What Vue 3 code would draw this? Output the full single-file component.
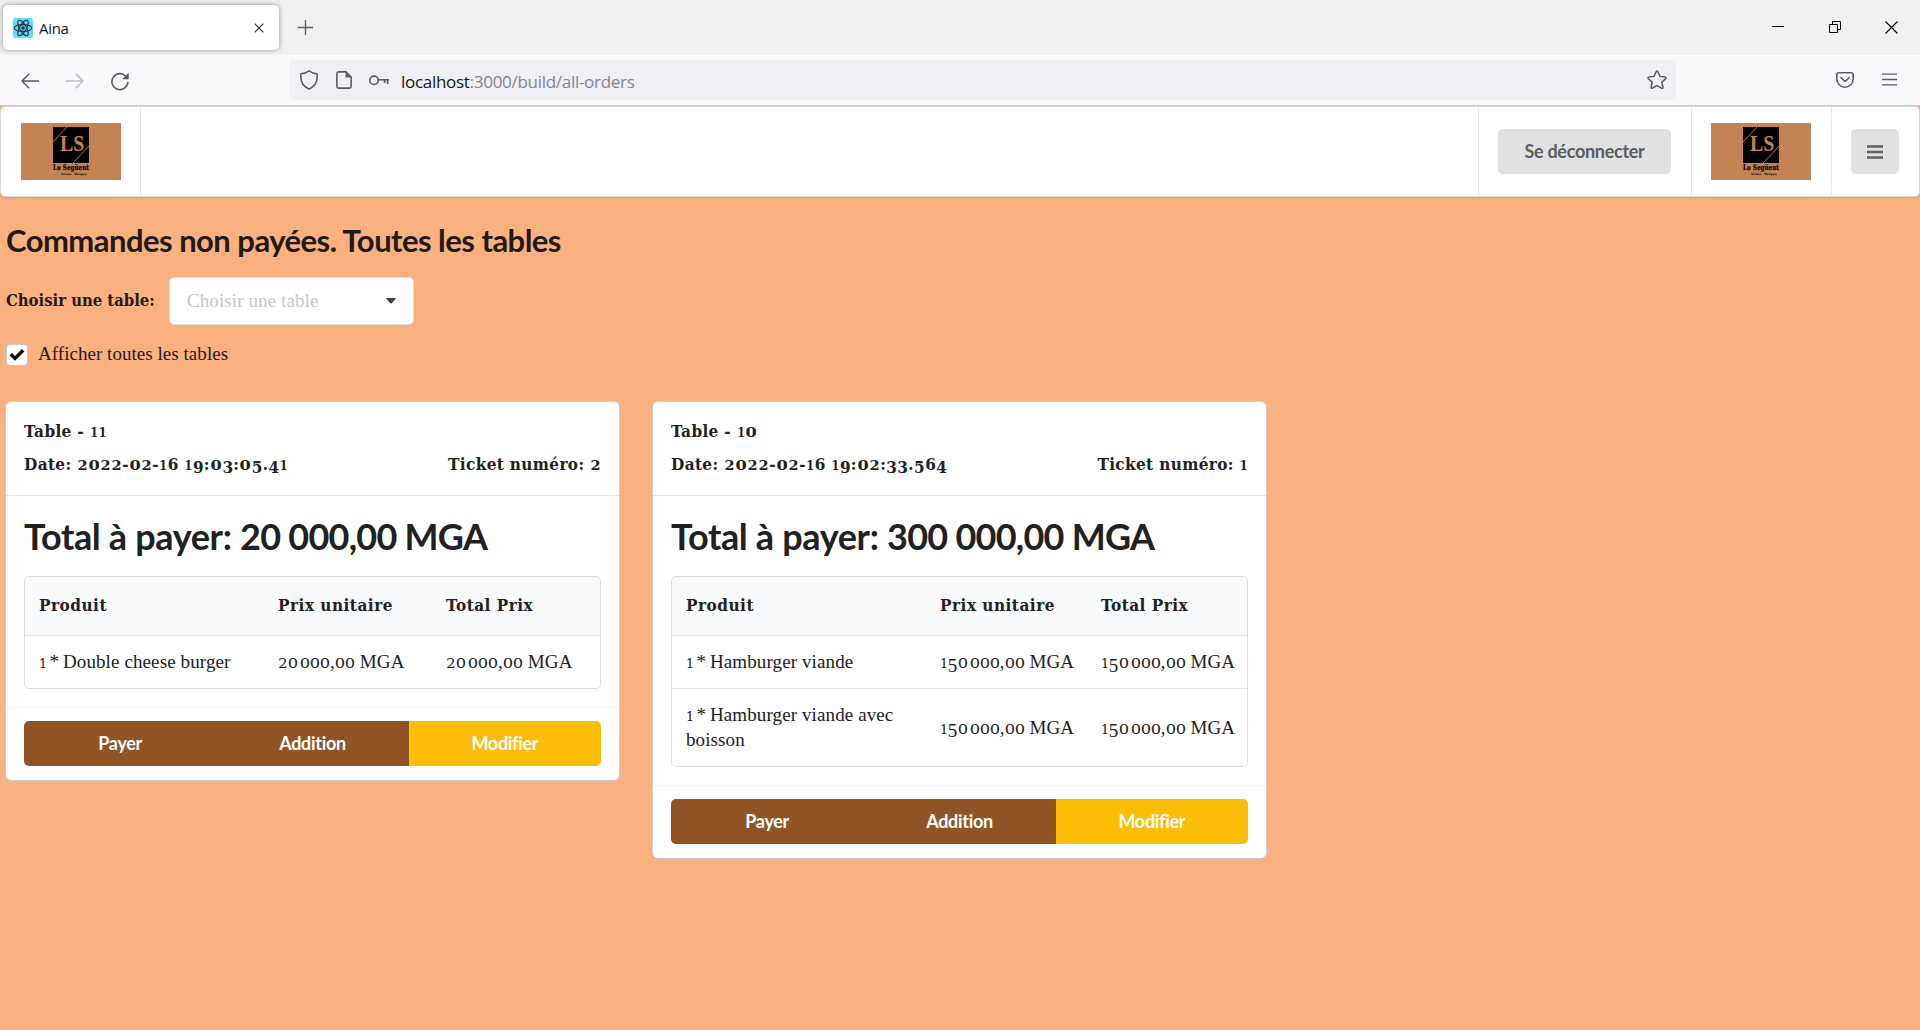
<script setup>
import { h } from 'vue'

// Text set with old-style figures: 0-2 sit at x-height, 3-5, 7 and 9 descend.
const glyph = (c) => {
  if (/\d/.test(c)) return h('span', { class: ['fig', `fig-${c}`] }, c)
  if (c === '\u202f') return h('span', { class: 'thin' }, c)
  if (c === '*') return h('span', { class: 'times' }, c)
  return c
}
const Figures = (props) => h('span', { class: 'figures' }, [...props.text].map(glyph))
Figures.props = ['text']

const LogoMark = () =>
  h('svg', { class: 'logo', viewBox: '0 0 100 57', width: 100, height: 57 }, [
    h('rect', { width: 100, height: 57, fill: '#c58252' }),
    h('rect', { x: 32, y: 4, width: 36, height: 36, fill: '#000' }),
    h('path', { d: 'M32 19 46 4M52 40 68 23', stroke: '#c58252', 'stroke-width': 0.9 }),
    h('text', { x: 51.2, y: 28.3, class: 'logo-initials', textLength: 24.5, lengthAdjust: 'spacingAndGlyphs' }, 'LS'),
    h('text', { x: 50, y: 47, class: 'logo-name', textLength: 36, lengthAdjust: 'spacingAndGlyphs' }, 'Lo Següent'),
    h('text', { x: 53, y: 51.6, class: 'logo-tag', textLength: 26, lengthAdjust: 'spacingAndGlyphs' }, 'Artisan   Malagasy')
  ])

const orders = [
  {
    table: 'Table - 11',
    date: 'Date: 2022-02-16 19:03:05.41',
    ticket: 'Ticket numéro: 2',
    amount: '20 000,00 MGA',
    layout: 'narrow',
    lines: [{ name: '1 * Double cheese burger', unit: '20\u202f000,00 MGA', sum: '20\u202f000,00 MGA' }]
  },
  {
    table: 'Table - 10',
    date: 'Date: 2022-02-16 19:02:33.564',
    ticket: 'Ticket numéro: 1',
    amount: '300 000,00 MGA',
    layout: 'wide',
    lines: [
      { name: '1 * Hamburger viande', unit: '150\u202f000,00 MGA', sum: '150\u202f000,00 MGA' },
      { name: '1 * Hamburger viande avec boisson', unit: '150\u202f000,00 MGA', sum: '150\u202f000,00 MGA' }
    ]
  }
]
</script>

<template>
  <div class="window">
    <div class="tabbar">
      <div class="tab">
        <svg class="favicon" width="20" height="20" viewBox="0 0 20 20">
          <rect width="20" height="20" rx="2.5" fill="#61dafb" />
          <g fill="none" stroke="#20303c" stroke-width="1.1">
            <ellipse cx="10" cy="10" rx="8.7" ry="3.4" />
            <ellipse cx="10" cy="10" rx="8.7" ry="3.4" transform="rotate(60 10 10)" />
            <ellipse cx="10" cy="10" rx="8.7" ry="3.4" transform="rotate(120 10 10)" />
          </g>
          <circle cx="10" cy="10" r="1.8" fill="#20303c" />
        </svg>
        <span class="tab-title">Aina</span>
        <svg class="tab-close" width="10" height="10" viewBox="0 0 10 10"><path d="M.7.7 9.3 9.3M9.3.7.7 9.3" stroke="#333" stroke-width="1.2" /></svg>
      </div>
      <svg class="new-tab" width="15" height="15" viewBox="0 0 15 15"><path d="M7.5 0v15M0 7.5h15" stroke="#5b5b66" stroke-width="1.3" /></svg>
      <div class="controls">
        <svg width="12" height="13" viewBox="0 0 12 13"><path d="M0 5.5h12" stroke="#000" /></svg>
        <svg width="12" height="13" viewBox="0 0 12 13" fill="none" stroke="#000"><path d="M.5 3.5h8v8h-8zM3.5 3.5v-3h8v8h-3" /></svg>
        <svg width="13" height="13" viewBox="0 0 13 13"><path d="M.5.5l12 12M12.5.5l-12 12" stroke="#000" stroke-width="1.1" /></svg>
      </div>
    </div>

    <div class="toolbar">
      <div class="nav-icons">
        <svg width="18" height="16" viewBox="0 0 18 16" fill="none" stroke="#5b5b66" stroke-width="1.5"><path d="M18 8H1.2M8.2.8 1 8l7.2 7.2" /></svg>
        <svg width="18" height="16" viewBox="0 0 18 16" fill="none" stroke="#bcbcc2" stroke-width="1.5"><path d="M0 8h16.8M9.8.8 17 8l-7.2 7.2" /></svg>
        <svg width="18" height="19" viewBox="0 0 18 19"><path d="M14.800 4.200A8 8 0 1 0 16.900 10" fill="none" stroke="#5b5b66" stroke-width="1.6" /><path d="M17.700.8v6.500h-6.600z" fill="#5b5b66" /></svg>
      </div>
      <div class="urlbar">
        <svg class="shield" width="18" height="20" viewBox="0 0 18 20"><path d="M9 .9c2.400 1.700 5 2.700 8.100 2.900v3.900c0 5-3 8.900-8.100 11.400C3.900 16.600.9 12.700.9 7.700V3.800C4 3.600 6.600 2.600 9 .9z" fill="none" stroke="#5b5b66" stroke-width="1.6" stroke-linejoin="round" /></svg>
        <svg class="page-icon" width="16" height="18" viewBox="0 0 16 18"><path d="M10 .9H2.800Q.9.900.9 2.800v12.400q0 1.900 1.900 1.900h10.400q1.900 0 1.900-1.900V6z" fill="none" stroke="#5b5b66" stroke-width="1.6" /><path d="M9.500.500v6h6z" fill="#5b5b66" /></svg>
        <svg class="key" width="20" height="11" viewBox="0 0 20 11" fill="none" stroke="#5b5b66" stroke-width="1.6"><circle cx="5" cy="5.300" r="4.200" /><path d="M9.200 4.800H20M18.600 4.800v4.200M15.600 4.800v3.200" /></svg>
        <span class="url"><b>localhost</b>:3000/build/all-orders</span>
        <svg class="star" width="20" height="20" viewBox="0 0 20 20"><path d="M9.200 1.700q.8-1.300 1.600 0l2.200 4.700 5.200.7q1.500.4.500 1.500l-3.800 3.500 1 5.200q0 1.500-1.300.9L10 15.700l-4.600 2.500q-1.300.6-1.300-.9l1-5.200L1.300 8.600q-1-1.100.5-1.500L7 6.400z" fill="none" stroke="#5b5b66" stroke-width="1.500" /></svg>
      </div>
      <svg class="pocket" width="18" height="16" viewBox="0 0 18 16" fill="none" stroke="#5b5b66" stroke-width="1.600"><path d="M2.800.8h12.400q2 0 2 2V7a8.200 8.200 0 0 1-16.400 0V2.800q0-2 2-2z" /><path d="M4.800 5.500 9 9.500l4.200-4" stroke-linecap="round" /></svg>
      <svg class="burger" width="15" height="13" viewBox="0 0 15 13"><path d="M0 1.200h15M0 6.500h15M0 11.800h15" stroke="#5b5b66" stroke-width="1.300" /></svg>
    </div>

    <nav class="menu">
      <div class="item"><LogoMark /></div>
      <div class="item right"><button class="grey logout">Se déconnecter</button></div>
      <div class="item brand"><LogoMark /></div>
      <div class="item last">
        <button class="grey icon"><svg width="16" height="14" viewBox="0 0 16 14"><path d="M0 1.500h16M0 7h16M0 12.500h16" stroke="#606162" stroke-width="2.600" /></svg></button>
      </div>
    </nav>

    <main>
      <h2>Commandes non payées. Toutes les tables</h2>
      <div class="field">
        <label>Choisir une table:</label>
        <div class="dropdown">
          <span>Choisir une table</span>
          <svg width="10" height="6" viewBox="0 0 10 6"><path d="M.8 0h8.400q1 .2.300 1L5.700 5.200q-.7.600-1.400 0L.5 1Q-.2.200.8 0z" fill="#404040" /></svg>
        </div>
      </div>
      <div class="check">
        <span class="box"><svg width="16" height="13" viewBox="0 0 16 13"><path d="M1.800 6.300 6 10.400 14.200 2.300" fill="none" stroke="#111" stroke-width="3.500" /></svg></span>
        <span>Afficher toutes les tables</span>
      </div>

      <div class="cards">
        <article v-for="o in orders" :key="o.table" :class="['card', o.layout]">
          <header>
            <div><Figures :text="o.table" /></div>
            <div class="meta"><Figures :text="o.date" /><Figures :text="o.ticket" /></div>
          </header>
          <section>
            <h1>Total à payer: <span class="amount">{{ o.amount }}</span></h1>
            <div class="table">
              <div class="row head"><span>Produit</span><span>Prix unitaire</span><span>Total Prix</span></div>
              <div v-for="l in o.lines" :key="l.name" class="row">
                <span><Figures :text="l.name" /></span>
                <span class="price"><Figures :text="l.unit" /></span>
                <span class="price"><Figures :text="l.sum" /></span>
              </div>
            </div>
          </section>
          <footer>
            <div class="buttons"><button>Payer</button><button>Addition</button><button class="yellow">Modifier</button></div>
          </footer>
        </article>
      </div>
    </main>
  </div>
</template>

<style>
body { margin: 0; background: #fbb080; }
.logo { display: block; }
.logo-initials { font: 700 24px "Liberation Serif", serif; fill: #c58252; text-anchor: middle; }
.logo-name { font: 700 7.5px "DejaVu Serif", serif; fill: #000; stroke: #000; stroke-width: .2px; text-anchor: middle; }
.logo-tag { font: 700 3px "DejaVu Serif", serif; fill: #000; text-anchor: middle; white-space: pre; }
.fig { display: inline-block; width: .52em; text-align: center; letter-spacing: 0; line-height: 0; }
.fig-0, .fig-1, .fig-2 { font-family: "DejaVu Serif", serif; font-size: .67em; }
.fig-0 { width: .79em; transform: scaleX(1.28); }
.fig-1 { width: .6em; }
.fig-2 { width: .77em; transform: scaleX(1.15); }
.fig-3, .fig-4, .fig-5, .fig-7, .fig-9 { vertical-align: -.2em; }
.thin { font-size: .5em; line-height: 0; }
.times { margin: 0 -2px 0 -1px; position: relative; left: -1px; }
header .fig { width: .65em; }
header .fig-0, header .fig-1, header .fig-2 { font-size: .73em; font-family: "DejaVu Serif Condensed", "DejaVu Serif", serif; font-stretch: condensed; }
header .fig-0 { width: 1em; transform: scaleX(1.45); }
header .fig-1 { width: .69em; }
header .fig-2 { width: .88em; transform: scaleX(1.3); }
</style>

<style scoped>
* { box-sizing: border-box; }
.window { width: 1920px; height: 1030px; overflow: hidden; background: #fbb080; color: #212121; font: 19px/25px "Liberation Serif", Georgia, serif; letter-spacing: .1px; }
svg { display: block; flex: none; }
button { border: 0; margin: 0; padding: 0; font: 700 18px/18px Lato, sans-serif; }

.tabbar { height: 55px; background: #f0f0f0; display: flex; padding: 5px 22px 5px 3px; }
.tab { width: 276px; height: 45px; background: #fff; border-radius: 5px; box-shadow: 0 0 5px rgba(0, 0, 0, .4); display: flex; align-items: center; padding: 0 15px 0 10px; }
.tab-title { font: 15px/20px "Open Sans", sans-serif; color: #15141a; margin-left: 6px; letter-spacing: -.3px; }
.tab-close { margin-left: auto; }
.new-tab { margin: 15px 0 0 19px; }
.controls { margin: 16px 0 0 auto; display: flex; gap: 44px; }
.controls svg:first-child { margin-right: 1px; }

.toolbar { height: 51px; background: #f9f9fb; border-bottom: 1px solid #cccccf; display: flex; padding: 5px 22px 0 21px; }
.nav-icons { display: flex; align-items: center; gap: 27px; width: 268px; height: 42px; }
.urlbar { width: 1387px; height: 40px; border-radius: 5px; background: #f0eff4; display: flex; align-items: center; padding: 0 9px 0 11px; }
.page-icon { margin-left: 18px; }
.key { margin-left: 17px; }
.url { margin-left: 12px; font: 17px/24px "Open Sans", sans-serif; color: #85848c; padding-top: 3px; letter-spacing: -.29px; }
.url b { font-weight: 400; color: #15141a; }
.star { margin-left: auto; }
.pocket { margin: 12px 0 0 160px; }
.burger { margin: 13px 0 0 28px; }

.menu { height: 91px; background: #fff; border: 1px solid #d9d9da; border-radius: 5px; box-shadow: 0 1px 2px rgba(34, 36, 38, .15); display: flex; }
.item { display: flex; align-items: center; padding: 0 19px 0 20px; border-right: 1px solid #e8e8e9; }
.right { margin-left: auto; border-left: 1px solid #e8e8e9; padding: 0 20px 0 19px; }
.item.brand { padding: 0 20px 0 19px; }
.item.last { border-right: 0; padding: 0 20px 0 19px; }
.grey { background: #e0e1e2; color: #5c5d5e; border-radius: 5px; height: 45px; }
.logout { width: 173px; letter-spacing: -.28px; padding-bottom: 1px; }
.icon { width: 48px; display: flex; align-items: center; justify-content: center; }

main { padding: 0 6px; }
h2 { margin: 25px 0 0; font: 700 31px/36px Lato, sans-serif; color: #211a15; letter-spacing: -.53px; white-space: nowrap; }
.field { display: flex; align-items: center; height: 48px; margin-top: 19px; color: #211a15; }
label { width: 163px; font: 700 16.500px/24px "DejaVu Serif Condensed", "DejaVu Serif", serif; font-stretch: condensed; letter-spacing: 0; white-space: nowrap; }
.dropdown { width: 245px; height: 48px; background: #fff; border: 1px solid #dededf; border-radius: 5px; display: flex; align-items: center; justify-content: space-between; padding: 0 17px; color: #c7c7c7; }
.dropdown span { padding-bottom: 2px; }
.check { display: flex; align-items: center; height: 23px; margin-top: 18px; color: #211a15; letter-spacing: .04px; }
.check > span:last-child { padding-bottom: 3px; }
.box { width: 22px; height: 22px; background: #fff; border: 1px solid #c9c9ca; border-radius: 4px; display: flex; align-items: center; justify-content: center; margin-right: 10px; }

.cards { display: flex; align-items: flex-start; gap: 34px; margin-top: 36px; }
.card { width: 613px; background: #fff; border-radius: 5px; box-shadow: 0 1px 3px #c8c0bb, 0 0 0 1px #d4d4d5; }
header { height: 94px; padding: 17px 18px 0; border-bottom: 1px solid #e7e7e8; font: 700 17px/25px "DejaVu Serif Condensed", "DejaVu Serif", serif; font-stretch: condensed; letter-spacing: .35px; white-space: nowrap; }
header > div { height: 25px; }
header .meta { display: flex; justify-content: space-between; margin-top: 8px; }
section { padding: 0 18px 18px; }
h1 { margin: 0; padding-top: 17px; height: 80px; font: 700 36px/46px Lato, sans-serif; letter-spacing: -.35px; white-space: nowrap; }
.amount { letter-spacing: -.75px; }
.table { border: 1px solid #dededf; border-radius: 5px; }
.row { display: grid; grid-template-columns: 239px 168px 1fr; align-items: center; padding: 13px 0 14px; border-top: 1px solid #e7e7e8; }
.row > span { padding: 0 14px; }
.wide .row { grid-template-columns: 254px 161px 1fr; }
.wide .row > span { padding-right: 0; }
.wide .row > span:first-child { padding-right: 14px; }
.row.head { height: 58px; background: #f9fafb; border-top: 0; border-radius: 5px 5px 0 0; font: 700 17px/25px "DejaVu Serif Condensed", "DejaVu Serif", serif; font-stretch: condensed; letter-spacing: .5px; }
.price { white-space: nowrap; }
footer { border-top: 1px solid #f1f1f1; padding: 13px 18px 14px; }
.buttons { display: flex; height: 45px; border-radius: 5px; overflow: hidden; }
.buttons button { flex: 1; background: #8f5527; color: #fff; letter-spacing: -.3px; padding-bottom: 1px; }
.buttons .yellow { background: #fbbd08; }
</style>
